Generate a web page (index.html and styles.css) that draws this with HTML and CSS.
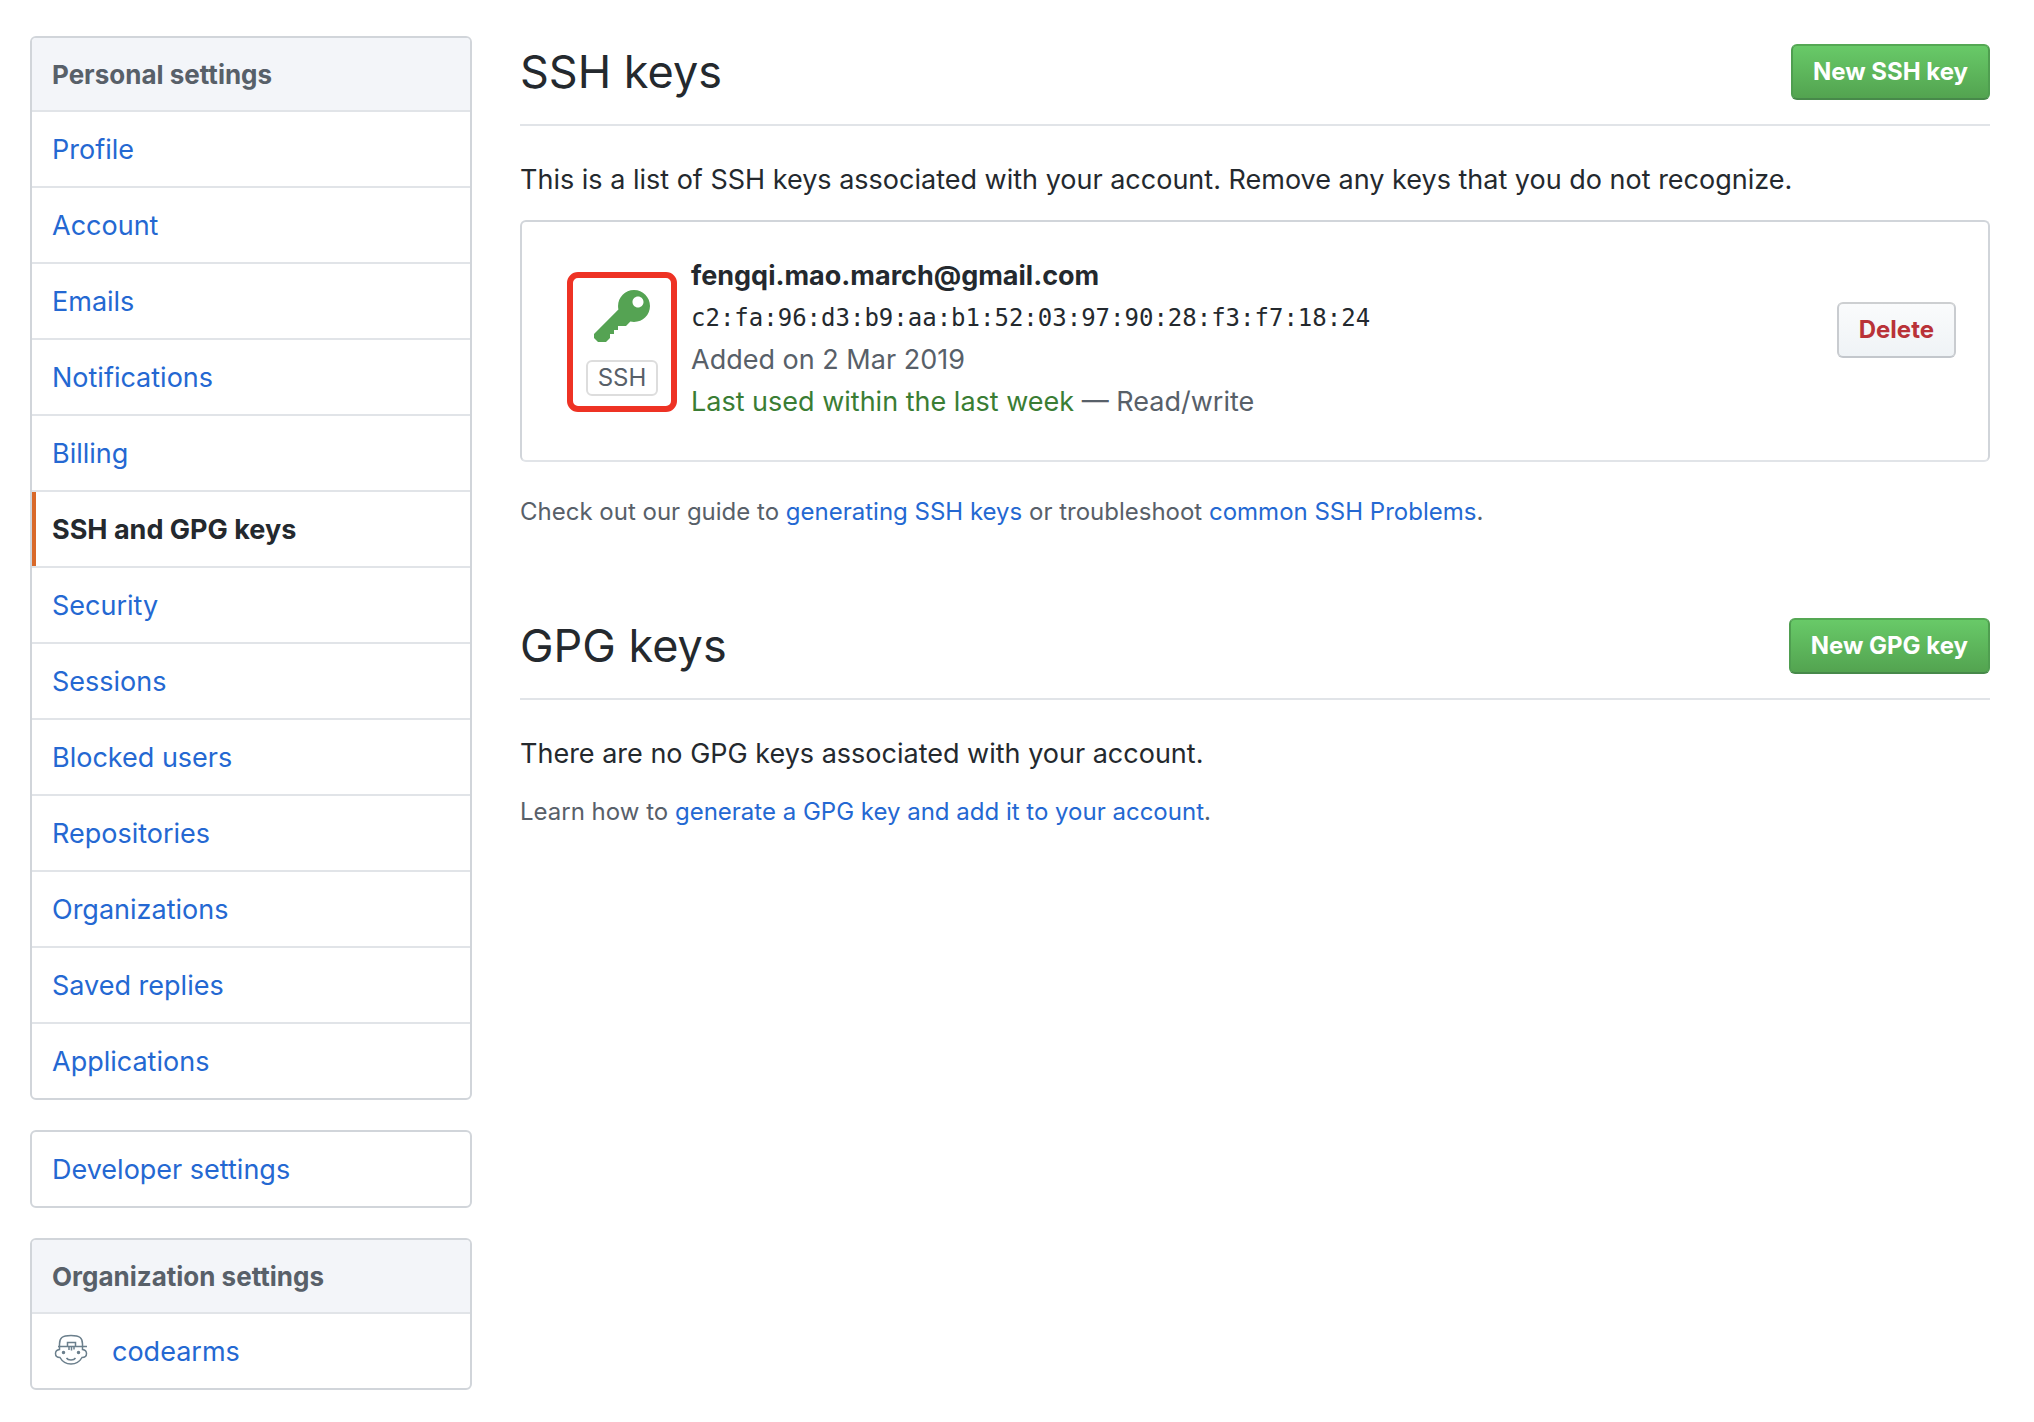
FILE: index.html
```html
<!DOCTYPE html>
<html lang="en">
<head>
<meta charset="utf-8">
<title>SSH and GPG keys</title>
<link rel="stylesheet" href="styles.css">
</head>
<body>
<div class="page">
  <aside class="sidebar">
    <nav class="menu" aria-labelledby="personal-heading">
      <h3 class="menu-heading" id="personal-heading">Personal settings</h3>
      <a class="menu-item" href="#profile">Profile</a>
      <a class="menu-item" href="#account">Account</a>
      <a class="menu-item" href="#emails">Emails</a>
      <a class="menu-item" href="#notifications">Notifications</a>
      <a class="menu-item" href="#billing">Billing</a>
      <a class="menu-item selected" href="#keys" aria-current="page">SSH and GPG keys</a>
      <a class="menu-item" href="#security">Security</a>
      <a class="menu-item" href="#sessions">Sessions</a>
      <a class="menu-item" href="#blocked">Blocked users</a>
      <a class="menu-item" href="#repositories">Repositories</a>
      <a class="menu-item" href="#organizations">Organizations</a>
      <a class="menu-item" href="#replies">Saved replies</a>
      <a class="menu-item" href="#applications">Applications</a>
    </nav>
    <nav class="menu">
      <a class="menu-item" href="#developer">Developer settings</a>
    </nav>
    <nav class="menu" aria-labelledby="org-heading">
      <h3 class="menu-heading" id="org-heading">Organization settings</h3>
      <a class="menu-item" href="#codearms">
        <svg class="avatar" viewBox="0 0 40 40" aria-hidden="true">
          <path d="M7.500 15V12C7.500 6 10 3.500 19 3.500S30.500 6 30.500 12V15"/>
          <path d="M6 14.500H35"/>
          <path d="M15.500 14V10.500H23.500V14M17 15V18M19.500 15V18.500M22 15V17.500"/>
          <path d="M7.500 15V17.500C4.500 18 3.500 19.500 3.500 21.500C3.500 24 5.500 25.500 8 25.500C10.500 30 14 32 19 32S27.500 30 30 25.500C32.500 25.500 34.500 24 34.500 21.500C34.500 19.500 33.500 18 30.500 17.500V15"/>
          <path d="M14.500 26C16 28.500 22 28.500 23.500 26"/>
          <circle cx="11.500" cy="20.500" r="1"/>
          <circle cx="26.500" cy="20.500" r="1"/>
        </svg>
        codearms
      </a>
    </nav>
  </aside>

  <main class="content">
    <section>
      <header class="subhead">
        <h2 class="title">SSH keys</h2>
        <button class="btn btn-primary" type="button">New SSH key</button>
      </header>
      <p class="lead">This is a list of SSH keys associated with your account. Remove any keys that you do not recognize.</p>
      <div class="key-card">
        <div class="key-type">
          <svg class="key-icon" viewBox="0 0 14 16" aria-hidden="true"><path fill-rule="evenodd" d="M12.830 2.170C12.080 1.420 11.140 1.030 10 1c-1.130.03-2.080.42-2.830 1.170S6.040 3.860 6.010 5c0 .3.03.59.09.89L0 12v1l1 1h2l1-1v-1h1v-1h1v-1h2l1.090-1.110c.3.08.59.11.91.11 1.140-.03 2.080-.42 2.830-1.170S13.970 6.140 14 5c-.03-1.140-.42-2.080-1.170-2.830zM11 5.380c-.77 0-1.380-.61-1.380-1.380 0-.77.61-1.380 1.380-1.380.77 0 1.380.61 1.380 1.380 0 .77-.61 1.380-1.380 1.380z"/></svg>
          <span class="key-label">SSH</span>
        </div>
        <div class="key-details">
          <strong class="key-name">fengqi.mao.march@gmail.com</strong>
          <code class="fingerprint">c2:fa:96:d3:b9:aa:b1:52:03:97:90:28:f3:f7:18:24</code>
          <span>Added on 2 Mar 2019</span>
          <span><span class="recent">Last used within the last week</span> — Read/write</span>
        </div>
        <button class="btn btn-danger" type="button">Delete</button>
      </div>
      <p class="note">Check out our guide to <a href="#ssh-guide">generating SSH keys</a> or troubleshoot <a href="#ssh-problems">common SSH Problems</a>.</p>
    </section>

    <section>
      <header class="subhead">
        <h2 class="title">GPG keys</h2>
        <button class="btn btn-primary" type="button">New GPG key</button>
      </header>
      <p class="lead">There are no GPG keys associated with your account.</p>
      <p class="note note-tight">Learn how to <a href="#gpg-guide">generate a GPG key and add it to your account</a>.</p>
    </section>
  </main>
</div>
</body>
</html>
```
FILE: styles.css
```css
* {
  box-sizing: border-box;
}

body {
  margin: 0;
  background: #fff;
  color: #24292e;
  font-family: Inter, "Liberation Sans", sans-serif;
  font-size: 27px;
  line-height: 42px;
}

h2, h3, p {
  margin: 0;
}

a {
  color: #2468d2;
  text-decoration: none;
}

.page {
  display: flex;
  align-items: flex-start;
  gap: 48px;
  padding: 36px 44px 32px 30px;
}

.sidebar {
  flex: 0 0 442px;
  display: flex;
  flex-direction: column;
  gap: 30px;
}

.menu {
  border: 2px solid #d1d5da;
  border-radius: 6px;
  overflow: hidden;
}

.menu-heading {
  padding: 16px 20px 14px;
  border-bottom: 2px solid #e1e4e8;
  background: #f3f5f9;
  color: #586069;
  font-size: 26px;
  font-weight: 700;
}

.menu-item {
  display: flex;
  align-items: center;
  gap: 20px;
  padding: 17px 20px 15px;
  border-bottom: 2px solid #e1e4e8;
}

.menu-item:last-child {
  border-bottom: 0;
}

.menu-item.selected {
  box-shadow: inset 4px 0 #d9692a;
  color: #24292e;
  font-weight: 700;
}

.avatar {
  width: 40px;
  height: 40px;
  fill: none;
  stroke: #6b7f8c;
  stroke-width: 1.5;
}

.avatar circle {
  fill: #6b7f8c;
}

.content {
  flex: 1;
  min-width: 0;
  display: flex;
  flex-direction: column;
  gap: 80px;
}

.subhead {
  display: flex;
  align-items: center;
  justify-content: space-between;
  padding-bottom: 16px;
  border-bottom: 2px solid #e1e4e8;
}

.title {
  font-size: 45px;
  font-weight: 400;
  line-height: 72px;
}

.lead {
  margin-top: 33px;
}

.btn {
  height: 56px;
  padding: 0 20px;
  border: 2px solid;
  border-radius: 6px;
  font-family: inherit;
  font-size: 24px;
  font-weight: 700;
  line-height: 40px;
  cursor: pointer;
}

.btn-primary {
  border-color: #55a854 #4f9e50 #47894a;
  background: linear-gradient(#69cb69, #52a24f) border-box;
  color: #fff;
}

.btn-danger {
  margin: 47px 0 0 auto;
  border-color: #cdcfd1 #c9ccd0 #c3c7cc;
  background: linear-gradient(#fafbfc, #eff3f6);
  color: #b93238;
}

.key-card {
  display: flex;
  align-items: flex-start;
  gap: 14px;
  margin-top: 19px;
  padding: 33px 32px 37px 45px;
  border: 2px solid #d1d5da;
  border-bottom-color: #e1e4e8;
  border-radius: 6px;
}

.key-type {
  display: flex;
  flex-direction: column;
  align-items: center;
  gap: 10px;
  width: 110px;
  margin-top: 17px;
  padding: 8px 0 10px;
  border: 6px solid #ee3224;
  border-radius: 11px;
}

.key-icon {
  width: 56px;
  height: 64px;
  fill: #55a353;
}

.key-label {
  width: 72px;
  border: 2px solid #dddddd;
  border-radius: 6px;
  color: #586069;
  font-size: 24px;
  line-height: 32px;
  text-align: center;
}

.key-details {
  display: flex;
  flex-direction: column;
  color: #586069;
}

.key-name {
  color: #24292e;
  font-weight: 700;
}

.fingerprint {
  color: #24292e;
  font-family: "DejaVu Sans Mono", monospace;
  font-size: 24px;
}

.recent {
  color: #3a7d34;
}

.note {
  margin-top: 32px;
  color: #586069;
  font-size: 24px;
  line-height: 36px;
}

.note-tight {
  margin-top: 19px;
}
```
